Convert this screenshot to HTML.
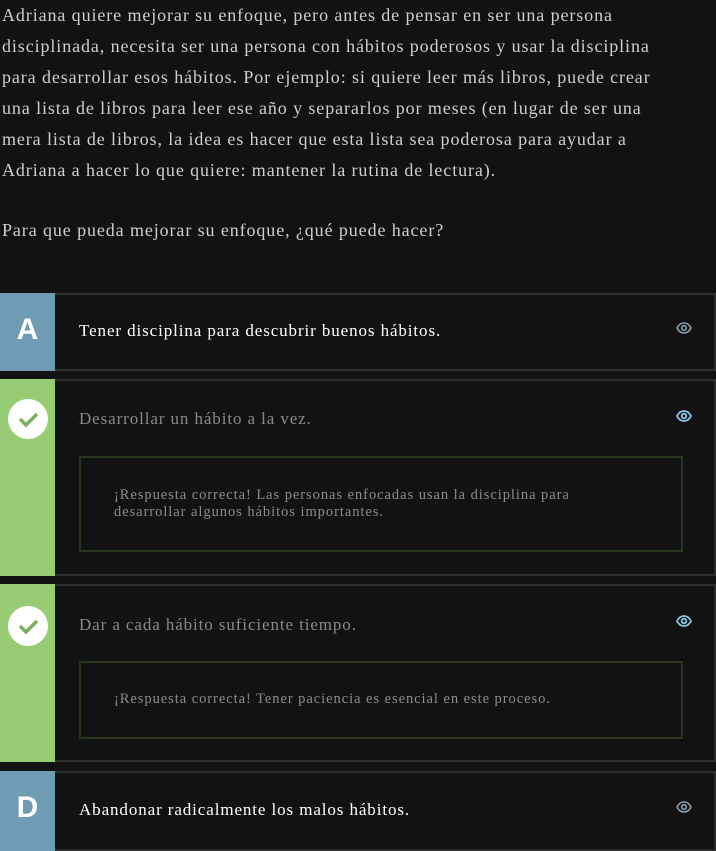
<!DOCTYPE html>
<html><head><meta charset="utf-8"><style>
body{margin:0;background:#121212;width:716px;height:849px;overflow:hidden;font-family:"Liberation Serif",serif;}
.p{position:absolute;left:2px;color:#cfcfcf;font-size:18px;line-height:31px;white-space:nowrap;letter-spacing:0.9px}
.card{position:absolute;left:0;width:716px;border:2px solid #2e2e2e;border-left:none;background:#121212;box-sizing:border-box}
.side{position:absolute;left:0;top:-2px;bottom:-2px;width:55px}
.blue{background:#6f9bb5}.green{background:#97cc74}
.letter{position:absolute;left:0;width:55px;text-align:center;color:#fff;font:bold 30px "Liberation Sans",sans-serif}
.t{position:absolute;left:79px;font-size:17px;white-space:nowrap;letter-spacing:0.9px}
.chk{position:absolute;left:8px;width:40px;height:40px;border-radius:50%;background:#fff}
.eye{position:absolute;left:676px}
.fb{position:absolute;left:79px;width:604px;border:2px solid #28351f;box-sizing:border-box;color:#8c8c8c;font-size:14.5px;line-height:17px;letter-spacing:0.95px}
</style></head><body>
<div class="p" style="top:0">Adriana quiere mejorar su enfoque, pero antes de pensar en ser una persona<br>disciplinada, necesita ser una persona con hábitos poderosos y usar la disciplina<br>para desarrollar esos hábitos. Por ejemplo: si quiere leer más libros, puede crear<br>una lista de libros para leer ese año y separarlos por meses (en lugar de ser una<br>mera lista de libros, la idea es hacer que esta lista sea poderosa para ayudar a<br>Adriana a hacer lo que quiere: mantener la rutina de lectura).</div>
<div class="p" style="top:215px">Para que pueda mejorar su enfoque, ¿qué puede hacer?</div>

<div class="card" style="top:293px;height:78px">
<div class="side blue"></div><div class="letter" style="top:18px">A</div>
<div class="t" style="top:26px;color:#fff">Tener disciplina para descubrir buenos hábitos.</div>
<svg class="eye" style="top:27px" width="16" height="12" viewBox="0 0 16 12"><path d="M1 6C3 2 6 1 8 1s5 1 7 5c-2 4-5 5-7 5S3 10 1 6z" fill="none" stroke="#8aa0ad" stroke-width="1.6"/><circle cx="8" cy="6" r="2.3" fill="none" stroke="#8aa0ad" stroke-width="1.6"/></svg>
</div>

<div class="card" style="top:379px;height:197px">
<div class="side green"></div>
<div class="chk" style="top:18px"><svg width="40" height="40" viewBox="0 0 40 40"><path d="M12 20l6 6 11-11" fill="none" stroke="#7ab060" stroke-width="3.5"/></svg></div>
<div class="t" style="top:28px;color:#8a8a8a">Desarrollar un hábito a la vez.</div>
<svg class="eye" style="top:29px" width="16" height="12" viewBox="0 0 16 12"><path d="M1 6C3 2 6 1 8 1s5 1 7 5c-2 4-5 5-7 5S3 10 1 6z" fill="none" stroke="#8cc8e6" stroke-width="1.8"/><circle cx="8" cy="6" r="2.3" fill="none" stroke="#8cc8e6" stroke-width="1.8"/></svg>
<div class="fb" style="top:75px;height:96px;padding:29px 0 0 33px">¡Respuesta correcta! Las personas enfocadas usan la disciplina para<br>desarrollar algunos hábitos importantes.</div>
</div>

<div class="card" style="top:584px;height:178px">
<div class="side green"></div>
<div class="chk" style="top:20px"><svg width="40" height="40" viewBox="0 0 40 40"><path d="M12 20l6 6 11-11" fill="none" stroke="#7ab060" stroke-width="3.5"/></svg></div>
<div class="t" style="top:29px;color:#8a8a8a">Dar a cada hábito suficiente tiempo.</div>
<svg class="eye" style="top:29px" width="16" height="12" viewBox="0 0 16 12"><path d="M1 6C3 2 6 1 8 1s5 1 7 5c-2 4-5 5-7 5S3 10 1 6z" fill="none" stroke="#8cc8e6" stroke-width="1.8"/><circle cx="8" cy="6" r="2.3" fill="none" stroke="#8cc8e6" stroke-width="1.8"/></svg>
<div class="fb" style="top:75px;height:78px;padding:28px 0 0 33px">¡Respuesta correcta! Tener paciencia es esencial en este proceso.</div>
</div>

<div class="card" style="top:771px;height:80px">
<div class="side blue"></div><div class="letter" style="top:18px">D</div>
<div class="t" style="top:27px;color:#fff">Abandonar radicalmente los malos hábitos.</div>
<svg class="eye" style="top:28px" width="16" height="12" viewBox="0 0 16 12"><path d="M1 6C3 2 6 1 8 1s5 1 7 5c-2 4-5 5-7 5S3 10 1 6z" fill="none" stroke="#8aa0ad" stroke-width="1.6"/><circle cx="8" cy="6" r="2.3" fill="none" stroke="#8aa0ad" stroke-width="1.6"/></svg>
</div>
</body></html>
